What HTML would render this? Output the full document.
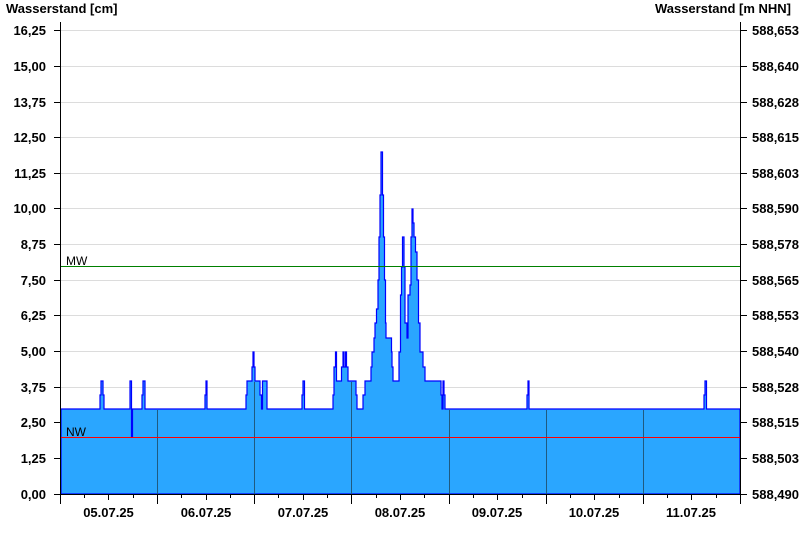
<!DOCTYPE html>
<html><head><meta charset="utf-8"><style>
html,body{margin:0;padding:0;background:#fff;}
svg{display:block;font-family:"Liberation Sans",Arial,sans-serif;}
.b{font-weight:bold;font-size:13px;fill:#000;}
</style></head><body>
<svg width="800" height="550" viewBox="0 0 800 550" shape-rendering="crispEdges">
<text x="6" y="13" class="b">Wasserstand [cm]</text>
<text x="791" y="13" class="b" text-anchor="end">Wasserstand [m NHN]</text>
<g stroke="#dcdcdc" stroke-width="1">
<line x1="61" x2="740" y1="458.5" y2="458.5"/><line x1="61" x2="740" y1="422.5" y2="422.5"/><line x1="61" x2="740" y1="387.5" y2="387.5"/><line x1="61" x2="740" y1="351.5" y2="351.5"/><line x1="61" x2="740" y1="315.5" y2="315.5"/><line x1="61" x2="740" y1="280.5" y2="280.5"/><line x1="61" x2="740" y1="244.5" y2="244.5"/><line x1="61" x2="740" y1="208.5" y2="208.5"/><line x1="61" x2="740" y1="173.5" y2="173.5"/><line x1="61" x2="740" y1="137.5" y2="137.5"/><line x1="61" x2="740" y1="102.5" y2="102.5"/><line x1="61" x2="740" y1="66.5" y2="66.5"/><line x1="61" x2="740" y1="30.5" y2="30.5"/>
</g>
<path d="M61,494 V409 H100 V395 H101 V381 H103 V395 H104 V409 H130 V381 H131.5 V437 H132.5 V409 H142 V395 H143 V381 H145 V409 H205 V395 H206 V381 H207 V409 H246 V395 H247 V381 H252 V367 H253 V352 H254 V367 H255 V381 H260 V395 H261.5 V409 H262.5 V381 H267 V409 H302 V395 H303 V381 H304.5 V409 H333 V395 H334 V367 H335.5 V352 H336.5 V381 H341.5 V367 H343 V352 H344 V367 H345.5 V352 H346.5 V367 H348 V381 H356 V395 H357 V409 H363 V395 H365 V381 H371 V367 H372 V352 H374 V338 H375 V323 H376.5 V309 H378 V280 H379 V237 H380 V195 H381 V152 H382.5 V195 H383.5 V237 H384.5 V280 H385.5 V323 H386 V338 H391.5 V352 H392 V367 H393 V381 H399 V352 H400.5 V295 H401.5 V267 H402.5 V237 H404 V267 H405 V323 H407 V338 H408 V295 H410 V285 H411 V237 H412 V209 H413 V223 H414 V237 H415.5 V252 H417 V280 H418.5 V323 H420 V352 H423 V367 H425 V381 H441 V395 H442 V409 H443 V381 H444 V395 H445 V409 H527 V395 H528 V381 H529 V409 H704 V395 H705 V381 H706.5 V409 H740 V494 Z" fill="#2aa6ff" stroke="#0000ff" stroke-width="1.2" shape-rendering="auto"/>
<g stroke="#1f5a80" stroke-width="1">
<line x1="157.5" x2="157.5" y1="410" y2="494"/><line x1="254.5" x2="254.5" y1="382" y2="494"/><line x1="351.5" x2="351.5" y1="382" y2="494"/><line x1="449.5" x2="449.5" y1="410" y2="494"/><line x1="546.5" x2="546.5" y1="410" y2="494"/><line x1="643.5" x2="643.5" y1="410" y2="494"/>
</g>
<rect x="61" y="266" width="679" height="1" fill="#008000"/>
<rect x="61" y="437" width="679" height="1" fill="#ff0000"/>
<text x="66" y="265" font-size="12" fill="#000">MW</text>
<text x="66" y="436" font-size="12" fill="#000">NW</text>
<g stroke="#000" stroke-width="1">
<line x1="60.5" x2="60.5" y1="22" y2="494.5"/>
<line x1="740.5" x2="740.5" y1="22" y2="494.5"/>
<line x1="60" x2="741" y1="494.5" y2="494.5"/>
</g>
<g stroke="#000" stroke-width="1">
<line x1="54" x2="61" y1="494.5" y2="494.5"/><line x1="54" x2="61" y1="458.5" y2="458.5"/><line x1="54" x2="61" y1="422.5" y2="422.5"/><line x1="54" x2="61" y1="387.5" y2="387.5"/><line x1="54" x2="61" y1="351.5" y2="351.5"/><line x1="54" x2="61" y1="315.5" y2="315.5"/><line x1="54" x2="61" y1="280.5" y2="280.5"/><line x1="54" x2="61" y1="244.5" y2="244.5"/><line x1="54" x2="61" y1="208.5" y2="208.5"/><line x1="54" x2="61" y1="173.5" y2="173.5"/><line x1="54" x2="61" y1="137.5" y2="137.5"/><line x1="54" x2="61" y1="102.5" y2="102.5"/><line x1="54" x2="61" y1="66.5" y2="66.5"/><line x1="54" x2="61" y1="30.5" y2="30.5"/>
<line x1="740" x2="747" y1="494.5" y2="494.5"/><line x1="740" x2="747" y1="458.5" y2="458.5"/><line x1="740" x2="747" y1="422.5" y2="422.5"/><line x1="740" x2="747" y1="387.5" y2="387.5"/><line x1="740" x2="747" y1="351.5" y2="351.5"/><line x1="740" x2="747" y1="315.5" y2="315.5"/><line x1="740" x2="747" y1="280.5" y2="280.5"/><line x1="740" x2="747" y1="244.5" y2="244.5"/><line x1="740" x2="747" y1="208.5" y2="208.5"/><line x1="740" x2="747" y1="173.5" y2="173.5"/><line x1="740" x2="747" y1="137.5" y2="137.5"/><line x1="740" x2="747" y1="102.5" y2="102.5"/><line x1="740" x2="747" y1="66.5" y2="66.5"/><line x1="740" x2="747" y1="30.5" y2="30.5"/>
<line x1="60.5" x2="60.5" y1="494" y2="504"/><line x1="157.5" x2="157.5" y1="494" y2="504"/><line x1="254.5" x2="254.5" y1="494" y2="504"/><line x1="351.5" x2="351.5" y1="494" y2="504"/><line x1="449.5" x2="449.5" y1="494" y2="504"/><line x1="546.5" x2="546.5" y1="494" y2="504"/><line x1="643.5" x2="643.5" y1="494" y2="504"/><line x1="740.5" x2="740.5" y1="494" y2="504"/>
<line x1="84.5" x2="84.5" y1="494" y2="498"/><line x1="108.5" x2="108.5" y1="494" y2="500"/><line x1="133.5" x2="133.5" y1="494" y2="498"/>
<line x1="181.5" x2="181.5" y1="494" y2="498"/><line x1="206.5" x2="206.5" y1="494" y2="500"/><line x1="230.5" x2="230.5" y1="494" y2="498"/>
<line x1="278.5" x2="278.5" y1="494" y2="498"/><line x1="303.5" x2="303.5" y1="494" y2="500"/><line x1="327.5" x2="327.5" y1="494" y2="498"/>
<line x1="376.5" x2="376.5" y1="494" y2="498"/><line x1="400.5" x2="400.5" y1="494" y2="500"/><line x1="424.5" x2="424.5" y1="494" y2="498"/>
<line x1="473.5" x2="473.5" y1="494" y2="498"/><line x1="497.5" x2="497.5" y1="494" y2="500"/><line x1="522.5" x2="522.5" y1="494" y2="498"/>
<line x1="570.5" x2="570.5" y1="494" y2="498"/><line x1="594.5" x2="594.5" y1="494" y2="500"/><line x1="619.5" x2="619.5" y1="494" y2="498"/>
<line x1="667.5" x2="667.5" y1="494" y2="498"/><line x1="691.5" x2="691.5" y1="494" y2="500"/><line x1="716.5" x2="716.5" y1="494" y2="498"/>
</g>
<g text-anchor="end">
<text x="46" y="499" class="b">0,00</text><text x="46" y="463" class="b">1,25</text><text x="46" y="427" class="b">2,50</text><text x="46" y="392" class="b">3,75</text><text x="46" y="356" class="b">5,00</text><text x="46" y="320" class="b">6,25</text><text x="46" y="285" class="b">7,50</text><text x="46" y="249" class="b">8,75</text><text x="46" y="213" class="b">10,00</text><text x="46" y="178" class="b">11,25</text><text x="46" y="142" class="b">12,50</text><text x="46" y="107" class="b">13,75</text><text x="46" y="71" class="b">15,00</text><text x="46" y="35" class="b">16,25</text>
</g>
<g>
<text x="752" y="499" class="b">588,490</text><text x="752" y="463" class="b">588,503</text><text x="752" y="427" class="b">588,515</text><text x="752" y="392" class="b">588,528</text><text x="752" y="356" class="b">588,540</text><text x="752" y="320" class="b">588,553</text><text x="752" y="285" class="b">588,565</text><text x="752" y="249" class="b">588,578</text><text x="752" y="213" class="b">588,590</text><text x="752" y="178" class="b">588,603</text><text x="752" y="142" class="b">588,615</text><text x="752" y="107" class="b">588,628</text><text x="752" y="71" class="b">588,640</text><text x="752" y="35" class="b">588,653</text>
</g>
<g text-anchor="middle">
<text x="108.5" y="517" class="b">05.07.25</text><text x="206" y="517" class="b">06.07.25</text><text x="303" y="517" class="b">07.07.25</text><text x="400" y="517" class="b">08.07.25</text><text x="497" y="517" class="b">09.07.25</text><text x="594" y="517" class="b">10.07.25</text><text x="691" y="517" class="b">11.07.25</text>
</g>
</svg>
</body></html>
